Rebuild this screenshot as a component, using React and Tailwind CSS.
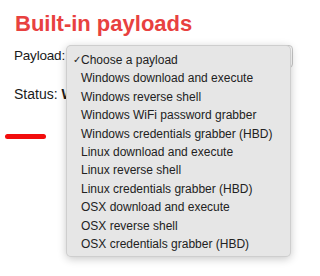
const payloads = [
  'Choose a payload',
  'Windows download and execute',
  'Windows reverse shell',
  'Windows WiFi password grabber',
  'Windows credentials grabber (HBD)',
  'Linux download and execute',
  'Linux reverse shell',
  'Linux credentials grabber (HBD)',
  'OSX download and execute',
  'OSX reverse shell',
  'OSX credentials grabber (HBD)',
];

export default function App() {
  return (
    <div className="relative w-[300px] h-[276px] overflow-hidden bg-white text-[#1a1a1a]"
         style={{ fontFamily: '"Liberation Sans", Arial, sans-serif' }}>

      <h1 className="pl-[15px] pt-[11px] text-[22px] leading-[26px] font-bold text-[#e8413f]">
        Built-in payloads
      </h1>

      <div className="flex items-center gap-[3px] pl-[14px] mt-[8px] h-[23px]">
        <span className="text-[13.5px] tracking-[-0.2px]">Payload:</span>
        <div className="h-[23px] w-[225px] rounded-[4px] border border-[#c8c8c8] bg-white" />
      </div>

      <p className="pl-[14px] mt-[17px] text-[14px] leading-[18px]">
        Status: <b>Waiting for payload</b>
      </p>

      <div className="ml-[5px] mt-[31px] h-[5px] w-[41px] rounded-full bg-[#f20d0d]" />

      {/* open select menu */}
      <ul className="absolute left-[66px] top-[45px] w-[225px] pt-[5px] pb-[3px] rounded-[5px] bg-[#e6e6e6] border border-black/10 shadow-[0_2px_8px_rgba(0,0,0,0.22)]">
        {payloads.map((p, i) => (
          <li key={p} className="relative pl-[14px] text-[12px] leading-[18.4px] text-[#222]">
            {i === 0 && <span className="absolute left-[6px] text-[10px]">✓</span>}
            {p}
          </li>
        ))}
      </ul>
    </div>
  );
}
